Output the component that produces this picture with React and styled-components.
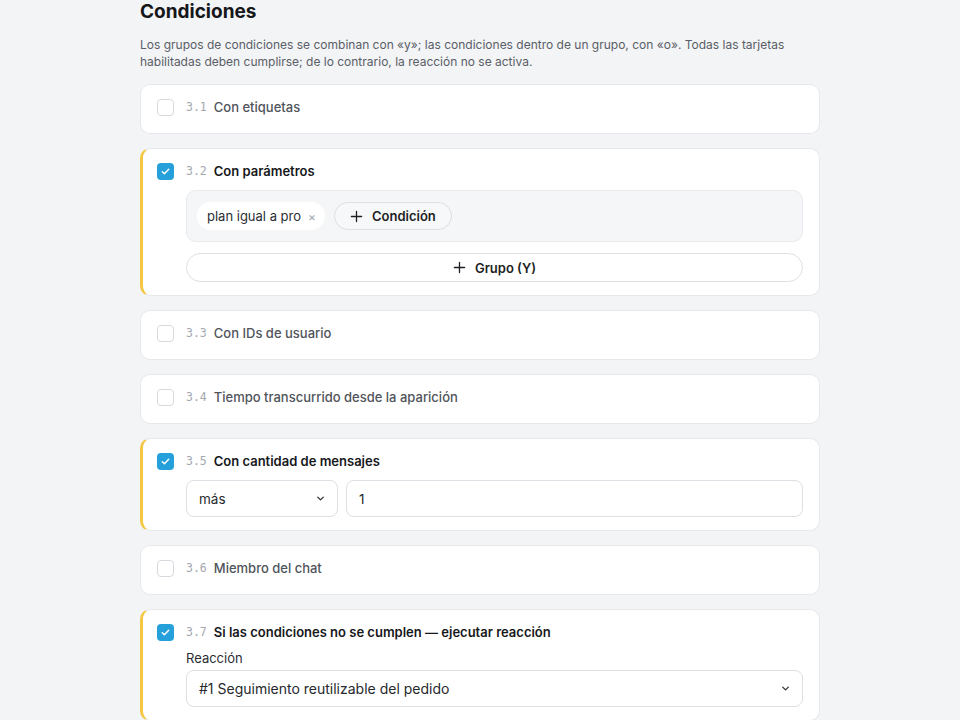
import React from 'react';
import styled, { createGlobalStyle } from 'styled-components';

const GlobalStyle = createGlobalStyle`
  body {
    margin: 0;
    background: #f3f4f6;
    font-family: Inter, 'Noto Sans', sans-serif;
    color: #1d1f23;
  }
`;

const Page = styled.div`
  width: 680px;
  margin: 0 auto;
  padding-bottom: 40px;
`;

const Title = styled.h2`
  margin: 0;
  font-size: 19px;
  line-height: 23px;
  font-weight: 700;
  color: #15171a;
`;

const Description = styled.p`
  margin: 13px 0 14px;
  font-size: 12px;
  line-height: 17px;
  color: #5a5e66;
`;

const List = styled.div`
  display: flex;
  flex-direction: column;
  gap: 14px;
`;

const Card = styled.div`
  background: #fff;
  border: 1px solid #e6e8eb;
  border-left: ${(p) => (p.$active ? '3px solid #f4c744' : '1px solid #e6e8eb')};
  border-radius: 10px;
  padding: 12px 16px ${(p) => (p.$active ? '13px' : '16px')} ${(p) => (p.$active ? '14px' : '16px')};
  display: flex;
  flex-direction: column;
  gap: 9px;
`;

const Header = styled.div`
  display: flex;
  align-items: center;
  height: 20px;
`;

const Box = styled.span`
  width: 17px;
  height: 17px;
  box-sizing: border-box;
  border-radius: 4px;
  border: ${(p) => (p.$checked ? 'none' : '1.5px solid #d6d9de')};
  background: ${(p) => (p.$checked ? '#26a0da' : '#fff')};
  display: flex;
  align-items: center;
  justify-content: center;
  margin-right: 12px;
  flex-shrink: 0;
`;

const Num = styled.span`
  font-family: 'DejaVu Sans Mono', 'Liberation Mono', monospace;
  font-size: 11.5px;
  color: #a3a7ae;
  margin-right: 7px;
`;

const Label = styled.span`
  font-size: 13px;
  font-weight: ${(p) => (p.$checked ? 600 : 500)};
  color: ${(p) => (p.$checked ? '#16181b' : '#50545b')};
`;

const Body = styled.div`
  margin-left: 29px;
  display: flex;
  flex-direction: column;
  gap: 11px;
`;

const Group = styled.div`
  background: #f5f6f8;
  border: 1px solid #e8eaed;
  border-radius: 10px;
  padding: 11px 10px;
  display: flex;
  gap: 9px;
`;

const Chip = styled.span`
  height: 28px;
  box-sizing: border-box;
  background: #fff;
  border-radius: 14px;
  padding: 0 9px 0 10px;
  display: flex;
  align-items: center;
  gap: 7px;
  font-size: 13px;
  color: #2b2e33;
`;

const ChipX = styled.span`
  font-size: 12px;
  color: #a3a7ae;
`;

const PillButton = styled.button`
  height: ${(p) => (p.$wide ? '29px' : '28px')};
  box-sizing: border-box;
  border: 1px solid #dcdfe3;
  background: ${(p) => (p.$wide ? '#fff' : '#f7f8f9')};
  border-radius: 15px;
  padding: 0 15px;
  display: flex;
  align-items: center;
  justify-content: center;
  gap: 9px;
  font-family: inherit;
  font-size: 13px;
  font-weight: 600;
  color: #1d1f23;
  width: ${(p) => (p.$wide ? '100%' : 'auto')};
`;

const Row = styled.div`
  display: flex;
  gap: 8px;
`;

const Field = styled.div`
  height: 37px;
  box-sizing: border-box;
  border: 1px solid #dcdfe3;
  border-radius: 8px;
  background: #fff;
  display: flex;
  align-items: center;
  justify-content: space-between;
  padding: 0 11px 0 12px;
  font-size: ${(p) => (p.$large ? '14px' : '13.5px')};
  color: #26292d;
  width: ${(p) => (p.$width ? p.$width : 'auto')};
  flex: ${(p) => (p.$grow ? 1 : 'none')};
`;

const FieldLabel = styled.div`
  font-size: 13px;
  line-height: 14px;
  color: #2b2e33;
  margin-bottom: -6px;
`;

const Check = () => (
  <svg width="11" height="11" viewBox="0 0 12 12" fill="none">
    <path d="M2.5 6.2l2.3 2.3 4.7-4.9" stroke="#fff" strokeWidth="1.6" strokeLinecap="round" strokeLinejoin="round" />
  </svg>
);

const Plus = () => (
  <svg width="13" height="13" viewBox="0 0 14 14" fill="none">
    <path d="M7 1.5v11M1.5 7h11" stroke="#1d1f23" strokeWidth="1.4" strokeLinecap="round" />
  </svg>
);

const Chevron = () => (
  <svg width="11" height="11" viewBox="0 0 12 12" fill="none">
    <path d="M3 4.5l3 3 3-3" stroke="#33363b" strokeWidth="1.5" strokeLinecap="round" strokeLinejoin="round" />
  </svg>
);

const CardHeader = ({ num, label, checked }) => (
  <Header>
    <Box $checked={checked}>{checked && <Check />}</Box>
    <Num>{num}</Num>
    <Label $checked={checked}>{label}</Label>
  </Header>
);

export default function App() {
  return (
    <Page>
      <GlobalStyle />
      <Title>Condiciones</Title>
      <Description>
        Los grupos de condiciones se combinan con «y»; las condiciones dentro de un grupo, con «o». Todas las tarjetas
        habilitadas deben cumplirse; de lo contrario, la reacción no se activa.
      </Description>
      <List>
        <Card>
          <CardHeader num="3.1" label="Con etiquetas" />
        </Card>
        <Card $active>
          <CardHeader num="3.2" label="Con parámetros" checked />
          <Body>
            <Group>
              <Chip>
                plan igual a pro <ChipX>×</ChipX>
              </Chip>
              <PillButton>
                <Plus /> Condición
              </PillButton>
            </Group>
            <PillButton $wide>
              <Plus /> Grupo (Y)
            </PillButton>
          </Body>
        </Card>
        <Card>
          <CardHeader num="3.3" label="Con IDs de usuario" />
        </Card>
        <Card>
          <CardHeader num="3.4" label="Tiempo transcurrido desde la aparición" />
        </Card>
        <Card $active>
          <CardHeader num="3.5" label="Con cantidad de mensajes" checked />
          <Body>
            <Row>
              <Field $width="152px">
                más <Chevron />
              </Field>
              <Field $grow>1</Field>
            </Row>
          </Body>
        </Card>
        <Card>
          <CardHeader num="3.6" label="Miembro del chat" />
        </Card>
        <Card $active>
          <CardHeader num="3.7" label="Si las condiciones no se cumplen — ejecutar reacción" checked />
          <Body>
            <FieldLabel>Reacción</FieldLabel>
            <Field $large>
              #1 Seguimiento reutilizable del pedido <Chevron />
            </Field>
          </Body>
        </Card>
      </List>
    </Page>
  );
}
